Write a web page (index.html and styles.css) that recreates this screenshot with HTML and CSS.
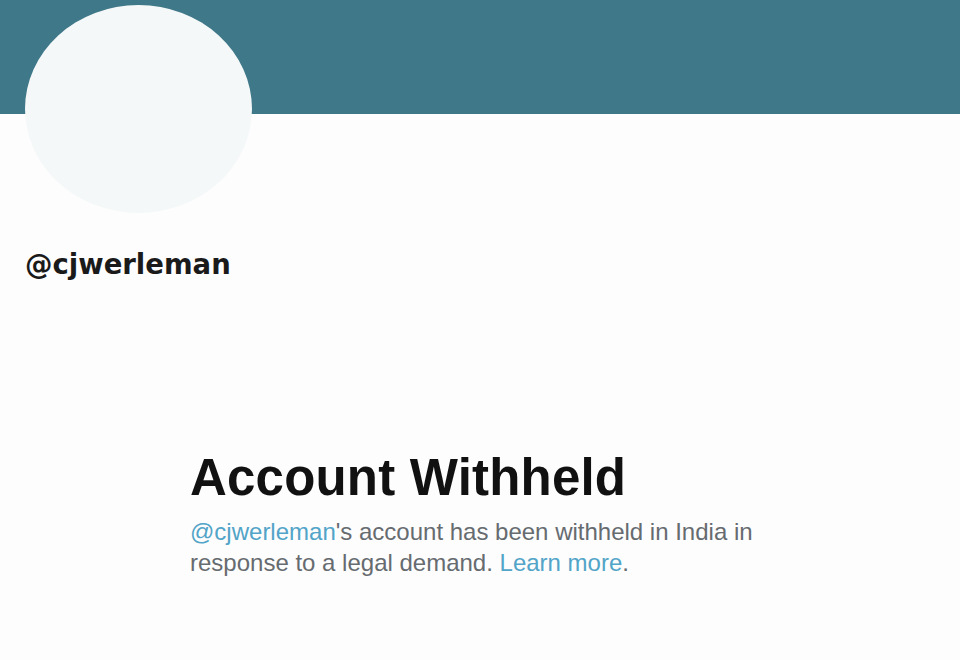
FILE: index.html
```html
<!DOCTYPE html>
<html lang="en">
<head>
    <meta charset="UTF-8">
    <meta name="viewport" content="width=device-width, initial-scale=1.0">
    <title>@cjwerleman</title>
    <link rel="stylesheet" href="styles.css">
</head>
<body>
    <!-- Profile header -->
    <div class="banner"></div>
    <div class="profile">
        <div class="avatar"></div>
        <div class="handle">@cjwerleman</div>
    </div>

    <!-- Withheld notice -->
    <div class="notice">
        <h1>Account Withheld</h1>
        <p>
            <a href="#">@cjwerleman</a>'s account has been withheld in India in
            response to a legal demand. <a href="#">Learn more</a>.
        </p>
    </div>
</body>
</html>
```

FILE: styles.css
```css
/* General Body Style */
body {
    font-family: 'Liberation Sans', Arial, sans-serif;
    background-color: #fdfdfd;
    color: #14171a;
    margin: 0;
    padding: 0;
}

/* Banner */
.banner {
    height: 114px;
    background-color: #3f7888;
}

/* Avatar + handle */
.profile {
    padding-left: 25px;
}

.avatar {
    width: 227px;
    height: 208px;
    margin-top: -109px;
    border-radius: 50%;
    background-color: #f5f8f9;
}

.handle {
    margin-top: 35px;
    font-family: 'DejaVu Sans', sans-serif;
    font-size: 27.5px;
    font-weight: bold;
    color: #1a1a1a;
}

/* Notice */
.notice {
    padding-left: 190px;
    margin-top: 170px;
}

.notice h1 {
    margin: 0;
    font-size: 51px;
    font-weight: bold;
    letter-spacing: 0.2px;
    color: #111;
    line-height: 56px;
}

.notice p {
    width: 580px;
    margin: 10px 0 0;
    font-size: 24px;
    line-height: 31px;
    color: #666b70;
}

.notice a {
    color: #52a4c8;
    text-decoration: none;
}
```
